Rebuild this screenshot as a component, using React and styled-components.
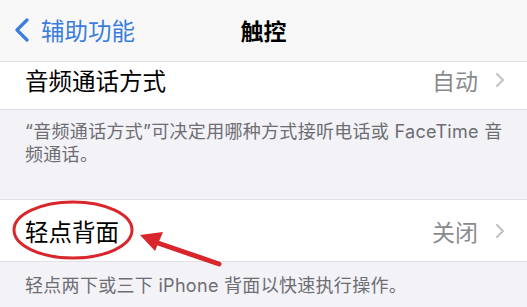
import React from "react";
import styled, { createGlobalStyle } from "styled-components";

const GlobalStyle = createGlobalStyle`
  html, body { margin: 0; padding: 0; background: #f2f2f7; }
  body { font-family: "Inter", "Noto Sans CJK SC", sans-serif; -webkit-font-smoothing: antialiased; }
  * { box-sizing: border-box; }
`;

const Page = styled.div`
  position: relative;
  width: 527px;
  height: 307px;
  overflow: hidden;
  background: #f2f2f7;
`;

const NavBar = styled.header`
  height: 62px;
  background: #f8f8f8;
  border-bottom: 1px solid #dedede;
  display: grid;
  grid-template-columns: 1fr auto 1fr;
  align-items: center;
  padding-bottom: 1px;
`;

const BackButton = styled.div`
  display: flex;
  align-items: center;
  gap: 12px;
  padding-left: 14px;
  color: #3b7ddd;
  font-size: 23.5px;
  font-family: "Noto Sans CJK SC", sans-serif;
`;

const Title = styled.div`
  font-size: 23px;
  font-weight: 700;
  color: #000;
  font-family: "Noto Sans CJK SC", sans-serif;
`;

const Row = styled.div`
  background: #fff;
  display: flex;
  align-items: center;
  height: ${(p) => p.$h}px;
  padding: 0 22px ${(p) => p.$pb || 0}px 25px;
  border-bottom: 1px solid #e2e2e6;
  border-top: ${(p) => (p.$top ? "1px solid #e2e2e6" : "none")};
`;

const Label = styled.div`
  flex: 1;
  font-size: 23.5px;
  color: #000;
  font-family: "Noto Sans CJK SC", sans-serif;
`;

const Value = styled.div`
  font-size: 23px;
  color: #8a8a8e;
  margin-right: 17px;
  font-family: "Noto Sans CJK SC", sans-serif;
`;

const Footnote = styled.div`
  height: ${(p) => p.$h}px;
  padding: ${(p) => p.$pt}px 22px 0 25px;
  font-size: 18px;
  letter-spacing: 0.3px;
  line-height: 23px;
  color: #6d6d72;
`;

const Overlay = styled.svg`
  position: absolute;
  left: 0;
  top: 0;
  pointer-events: none;
`;

const BackChevron = () => (
  <svg width="15" height="24" viewBox="0 0 15 24">
    <path d="M13 2 L3 12 L13 22" fill="none" stroke="#3b7ddd" strokeWidth="3.2" strokeLinecap="round" strokeLinejoin="round" />
  </svg>
);

const Chevron = () => (
  <svg width="10" height="16" viewBox="0 0 10 16">
    <path d="M2 2 L8 8 L2 14" fill="none" stroke="#c4c4c8" strokeWidth="2.2" strokeLinecap="round" strokeLinejoin="round" />
  </svg>
);

export default function App() {
  return (
    <Page>
      <GlobalStyle />
      <NavBar>
        <BackButton>
          <BackChevron />
          辅助功能
        </BackButton>
        <Title>触控</Title>
        <div />
      </NavBar>
      <Row $h={48} $pb={12}>
        <Label>音频通话方式</Label>
        <Value>自动</Value>
        <Chevron />
      </Row>
      <Footnote $h={89} $pt={10}>
        “音频通话方式”可决定用哪种方式接听电话或 FaceTime 音频通话。
      </Footnote>
      <Row $h={63} $top>
        <Label>轻点背面</Label>
        <Value>关闭</Value>
        <Chevron />
      </Row>
      <Footnote $h={45} $pt={12}>
        轻点两下或三下 iPhone 背面以快速执行操作。
      </Footnote>
      <Overlay width="527" height="307" viewBox="0 0 527 307">
        <ellipse cx="73" cy="230" rx="59" ry="28" fill="none" stroke="#d8262c" strokeWidth="3" />
        <line x1="219" y1="264" x2="155" y2="242" stroke="#d8262c" strokeWidth="5" strokeLinecap="round" />
        <polygon points="140,235 163,232 155,251" fill="#d8262c" />
      </Overlay>
    </Page>
  );
}
